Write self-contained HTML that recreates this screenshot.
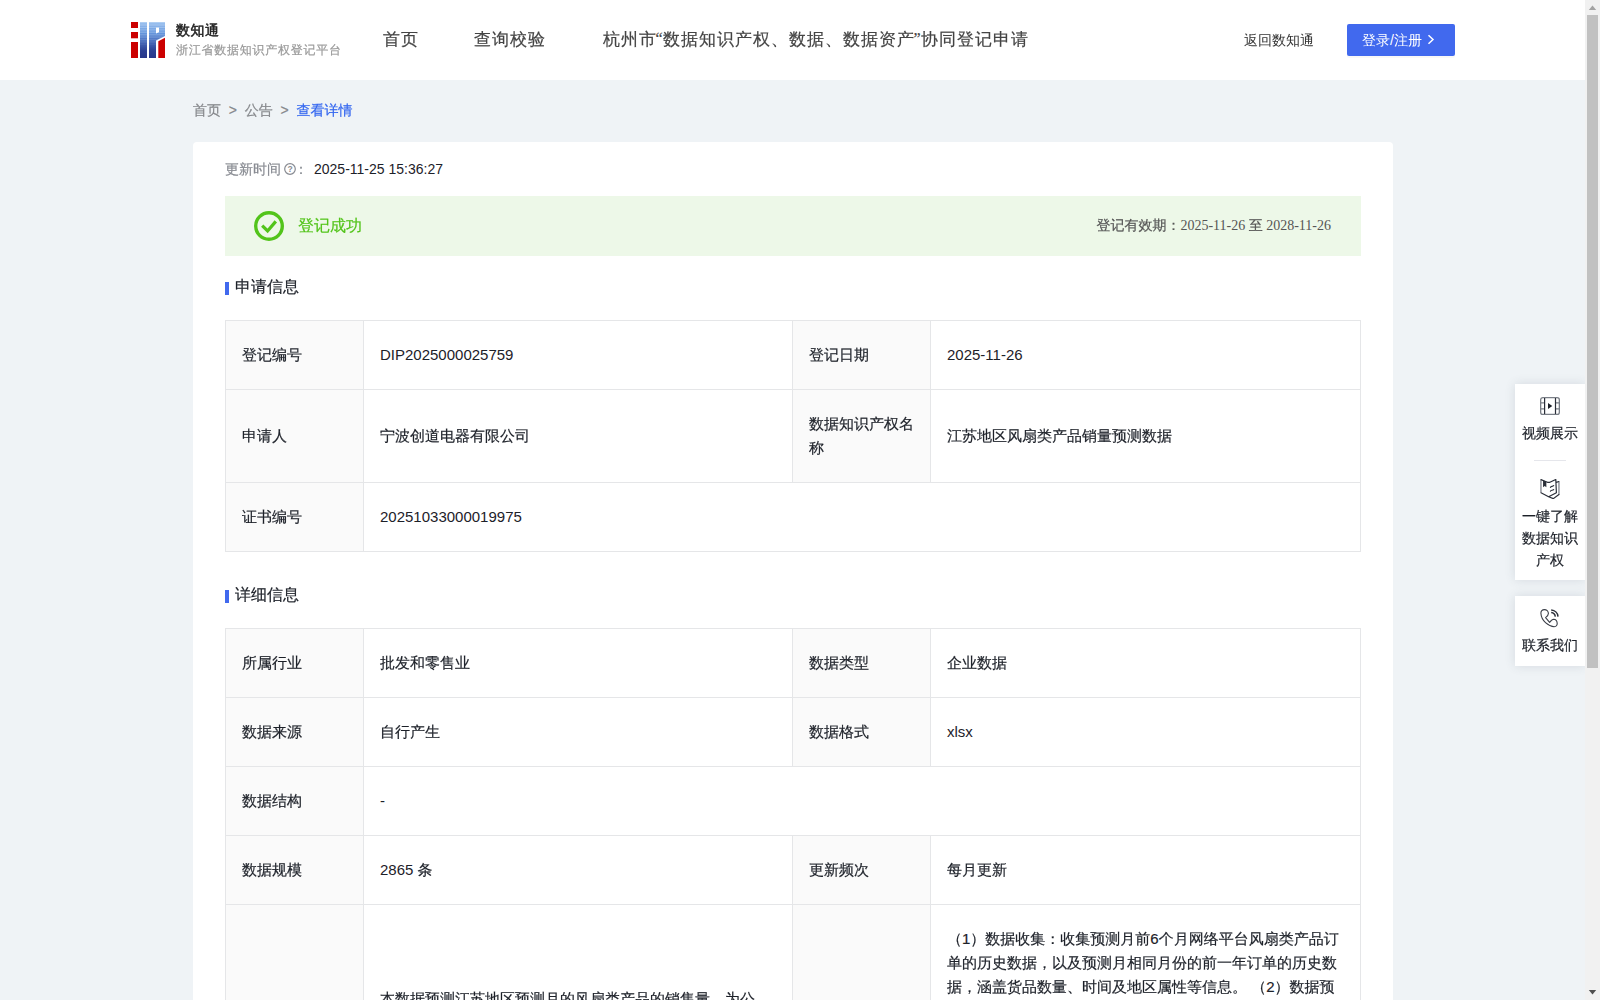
<!DOCTYPE html>
<html lang="zh-CN">
<head>
<meta charset="utf-8">
<title>数知通 - 查看详情</title>
<style>
*{box-sizing:border-box;margin:0;padding:0}
html,body{width:1600px;height:1000px;overflow:hidden}
body{background:#eff3f6;font-family:"Liberation Sans","WenQuanYi Zen Hei",sans-serif;font-size:14px;color:#1d2129;position:relative;-webkit-text-stroke:0.2px}
.n{-webkit-text-stroke:0}
.serif{font-family:"Liberation Serif","WenQuanYi Zen Hei",serif}
.header{position:absolute;left:0;top:0;width:1585px;height:80px;background:#fff}
.logo{position:absolute;left:131px;top:22px;width:34px;height:36px}
.brand{position:absolute;left:176px;top:21px;font-size:14px;line-height:18px;letter-spacing:0.5px;color:#222;-webkit-text-stroke:0.5px #222;white-space:nowrap}
.sub{position:absolute;left:176px;top:42px;font-size:12px;line-height:16px;letter-spacing:0.75px;color:#999;white-space:nowrap}
.nav{position:absolute;top:0;height:80px;line-height:80px;font-size:17px;letter-spacing:1px;color:#444;white-space:nowrap}
.nav q{quotes:none;display:inline-block;width:6px;letter-spacing:0;font-size:16px;position:relative;top:-1px;left:-1.5px}
.back{position:absolute;left:1244px;top:0;line-height:80px;font-size:14px;color:#333;white-space:nowrap}
.login{position:absolute;left:1347px;top:24px;width:108px;height:32px;background:#4169ee;border-radius:2px;color:#fff;font-size:14px;line-height:32px;padding-left:15px;white-space:nowrap;box-shadow:0 2px 1px rgba(0,0,0,0.03)}
.login svg{position:absolute;left:80px;top:9.5px;width:8px;height:11px}
.crumb{position:absolute;left:193px;top:100px;font-size:14px;line-height:20px;color:#86888c;white-space:nowrap}
.crumb b{font-weight:normal;color:#3366f0}
.crumb i{font-style:normal;margin:0 7.75px}
.card{position:absolute;left:193px;top:142px;width:1200px;height:900px;background:#fff;border-radius:4px}
.upd{position:absolute;left:32px;top:17px;font-size:14px;line-height:20px;color:#888b92;white-space:nowrap}
.upd .q{position:absolute;left:59px;top:4px;width:12px;height:12px}
.upd .c{position:absolute;left:69px;top:0}
.upd .t{position:absolute;left:89px;top:0;color:#1d2129}
.banner{position:absolute;left:32px;top:54px;width:1136px;height:60px;background:#edf8e8}
.banner svg{position:absolute;left:28px;top:14px;width:32px;height:32px}
.banner .ok{position:absolute;left:73px;top:0;line-height:60px;font-size:16px;color:#52c41a;white-space:nowrap}
.banner .valid{position:absolute;right:30px;top:0;line-height:60px;font-size:14px;color:#555;white-space:nowrap}
.sec{position:absolute;left:32px;font-size:16px;line-height:22px;color:#1d2129;padding-left:10px;white-space:nowrap}
.sec:before{content:"";position:absolute;left:0;top:6px;width:4px;height:13px;background:#4169ee}
table{position:absolute;left:32px;width:1135px;border-collapse:collapse;table-layout:fixed;font-size:15px;line-height:24px;color:#1d2129}
td{border:1px solid #e5e6e8;padding:22px 16px;vertical-align:middle}
td.l{background:#fafafa}
.side{position:absolute;left:1515px;width:70px;background:#fff;box-shadow:0 0 10px rgba(60,70,90,0.14);font-size:14px;line-height:22px;text-align:center;color:#1d2129}
.side svg{position:absolute;left:25px;width:20px;height:20px}
.side div{position:absolute;left:0;width:70px;white-space:nowrap}
.side hr{position:absolute;left:19px;top:76px;width:32px;height:1px;border:0;background:#e5e6eb}
.sb{position:absolute;left:1585px;top:0;width:15px;height:1000px;background:#f1f1f1}
.sb .th{position:absolute;left:2px;top:15px;width:11px;height:653px;background:#c1c1c1}
.sb svg{position:absolute;left:0;width:15px;height:15px}
</style>
</head>
<body>
<div class="header">
  <svg class="logo" viewBox="0 0 34 36">
    <defs>
      <linearGradient id="bg" x1="0" y1="0" x2="0" y2="1"><stop offset="0" stop-color="#94bdee"/><stop offset="0.3" stop-color="#6798de"/><stop offset="0.55" stop-color="#4569ba"/><stop offset="0.8" stop-color="#2c4093"/><stop offset="1" stop-color="#28378a"/></linearGradient>
      <linearGradient id="fade" x1="0" y1="0" x2="0" y2="1"><stop offset="0" stop-color="#fff" stop-opacity="0.42"/><stop offset="0.45" stop-color="#fff" stop-opacity="0.22"/><stop offset="0.7" stop-color="#fff" stop-opacity="0"/></linearGradient>
      <pattern id="ln" width="34" height="1.7" patternUnits="userSpaceOnUse"><rect x="0" y="0" width="34" height="0.6" fill="#fff"/></pattern>
      <mask id="lm"><rect x="0" y="0" width="34" height="36" fill="url(#ln)"/></mask>
    </defs>
    <rect x="0" y="0" width="7" height="6" fill="#cc0000"/>
    <rect x="0" y="10" width="7" height="6.3" fill="#cc0000"/>
    <rect x="0" y="20" width="7" height="16" fill="#cc0000"/>
    <rect x="9" y="0" width="7" height="36" fill="url(#bg)"/>
    <path d="M18 0H34V14L25 18.5V36H18Z M25 5.5V11.5L28 10.2V5.5Z" fill="url(#bg)" fill-rule="evenodd"/>
    <g mask="url(#lm)"><rect x="9" y="0" width="7" height="36" fill="url(#fade)"/><path d="M18 0H34V14L25 18.5V36H18Z M25 5.5V11.5L28 10.2V5.5Z" fill="url(#fade)" fill-rule="evenodd"/></g>
    <path d="M27.3 19.3L34 15.8V36H27.3Z" fill="#cc0000"/>
  </svg>
  <div class="brand">数知通</div>
  <div class="sub">浙江省数据知识产权登记平台</div>
  <div class="nav serif" style="left:383px">首页</div>
  <div class="nav serif" style="left:474px">查询校验</div>
  <div class="nav serif" style="left:603px">杭州市<q>“</q>数据知识产权、数据、数据资产<q>”</q>协同登记申请</div>
  <div class="back n">返回数知通</div>
  <div class="login n">登录/注册<svg viewBox="0 0 8 11"><path d="M1.5 1.2L6 5.5L1.5 9.8" fill="none" stroke="#fff" stroke-width="1.5"/></svg></div>
</div>
<div class="crumb">首页<i>&gt;</i>公告<i>&gt;</i><b>查看详情</b></div>
<div class="card">
  <div class="upd">更新时间<svg class="q" viewBox="0 0 12 12"><circle cx="6" cy="6" r="5.3" fill="none" stroke="#888b92" stroke-width="1.2"/><text x="6" y="9" font-size="8.5" font-family="Liberation Sans, sans-serif" font-weight="bold" text-anchor="middle" fill="#888b92" stroke="none">?</text></svg><span class="c">：</span><span class="t n">2025-11-25 15:36:27</span></div>
  <div class="banner">
    <svg viewBox="0 0 32 32"><circle cx="16" cy="16" r="13.3" fill="none" stroke="#52c41a" stroke-width="3.4"/><path d="M9.2 15.6L14.6 21L22.8 11.4" fill="none" stroke="#52c41a" stroke-width="3.2"/></svg>
    <div class="ok">登记成功</div>
    <div class="valid serif">登记有效期：<span class="n">2025-11-26</span> 至 <span class="n">2028-11-26</span></div>
  </div>
  <div class="sec" style="top:134px">申请信息</div>
  <table style="top:178px">
    <colgroup><col style="width:138px"><col style="width:429px"><col style="width:138px"><col style="width:430px"></colgroup>
    <tr><td class="l">登记编号</td><td class="n">DIP2025000025759</td><td class="l">登记日期</td><td class="n">2025-11-26</td></tr>
    <tr><td class="l">申请人</td><td>宁波创道电器有限公司</td><td class="l">数据知识产权名称</td><td>江苏地区风扇类产品销量预测数据</td></tr>
    <tr><td class="l">证书编号</td><td colspan="3" class="n">20251033000019975</td></tr>
  </table>
  <div class="sec" style="top:442px">详细信息</div>
  <table style="top:486px">
    <colgroup><col style="width:138px"><col style="width:429px"><col style="width:138px"><col style="width:430px"></colgroup>
    <tr><td class="l">所属行业</td><td>批发和零售业</td><td class="l">数据类型</td><td>企业数据</td></tr>
    <tr><td class="l">数据来源</td><td>自行产生</td><td class="l">数据格式</td><td class="n">xlsx</td></tr>
    <tr><td class="l">数据结构</td><td colspan="3" class="n">-</td></tr>
    <tr><td class="l">数据规模</td><td><span class="n">2865</span> 条</td><td class="l">更新频次</td><td>每月更新</td></tr>
    <tr><td class="l">数据简介</td><td>本数据预测江苏地区预测月的风扇类产品的销售量，为公<br>司的生产计划、库存管理与营销决策提供数据支撑，帮助企业合理安排备货数量，降低库存积压风险，提升运营效率。</td><td class="l">算法规则简要说明</td><td>（1）数据收集：收集预测月前6个月网络平台风扇类产品订单的历史数据，以及预测月相同月份的前一年订单的历史数据，涵盖货品数量、时间及地区属性等信息。 （2）数据预处理：对采集的订单数据进行清洗、去重与脱敏，剔除异常值并按地区和月份汇总。（3）模型预测：结合季节性因素与同比增长率，采用加权移动平均算法计算预测月的销售量。（4）结果输出：生成预测数据表并定期更新，形成最终的数据集。以上规则仅为简要说明内容。</td></tr>
  </table>
</div>
<div class="side" style="top:384px;height:196px">
  <svg style="top:12px" viewBox="0 0 20 20"><rect x="0.65" y="1.65" width="18.7" height="16.7" rx="2.2" fill="none" stroke="#7a7f87" stroke-width="1.3"/><path d="M1 6.9H4.6M1 12.8H4.6M15.4 6.9H19M15.4 12.8H19" stroke="#7a7f87" stroke-width="1.2" fill="none"/><path d="M4.6 2V18M15.5 2V18" stroke="#2a2e38" stroke-width="1.2" fill="none"/><path d="M8 7V13L12.3 10Z" fill="#1d2129"/></svg>
  <div style="top:38px">视频展示</div>
  <hr>
  <svg style="top:95px" viewBox="0 0 20 20"><path d="M0.95 0.9V13.6M18.95 2.8V15.4" stroke="#8a8e96" stroke-width="1.4" fill="none"/><path d="M1 0.6L6.8 3Q8.6 3.9 10.4 3L15.8 0.5L16.4 13.8L8.6 17.7L1 13.8M8.6 17.7L13.25 19.65L18.95 15.6M16.3 3.4L18.9 2.5" fill="none" stroke="#2a2e38" stroke-width="1.2" stroke-linejoin="round" stroke-linecap="round"/><path d="M3.05 1.3L6.35 2.7V8.3L4.7 6.9L3.05 8.2Z" fill="#2a2e38"/><path d="M10.4 8.4Q10.7 7.6 12 7.4Q13.3 7.3 13.7 6.6M10.4 12.3Q10.7 11.5 12 11.3Q13.3 11.2 13.7 10.5" fill="none" stroke="#2a2e38" stroke-width="1.1" stroke-linecap="round"/></svg>
  <div style="top:121px">一键了解</div>
  <div style="top:143px">数据知识</div>
  <div style="top:165px">产权</div>
</div>
<div class="side" style="top:596px;height:70px">
  <svg style="top:12px" viewBox="0 0 20 20"><path d="M4.4 1.6C2.2 1.6 0.8 3 0.9 5.3C1.1 8.5 2.6 12 5.5 14.6C8.3 17.1 11.5 18.6 14.2 18.7C16.2 18.7 17.3 17.3 17.2 15.4C17.1 13.2 15.6 11.4 13.6 11.3C12.3 11.3 11.4 12.2 9.6 14.4L5.6 9.6C7.6 8 8.4 7 8.4 5.4C8.3 3.4 6.6 1.6 4.4 1.6Z" fill="none" stroke="#3a3e47" stroke-width="1.1" stroke-linejoin="round"/><path d="M11.2 2.1C14.8 2.4 17.8 5 18 8.6M11.2 4.6C13.4 4.9 15 6.4 15.3 8.6" fill="none" stroke="#2a2e38" stroke-width="1.5"/></svg>
  <div style="top:38px">联系我们</div>
</div>
<div class="sb">
  <svg style="top:0" viewBox="0 0 15 15"><path d="M3.8 10L7.5 5.6L11.2 10Z" fill="#a3a3a3"/></svg>
  <div class="th"></div>
  <svg style="top:985px" viewBox="0 0 15 15"><path d="M3.8 5L7.5 9.4L11.2 5Z" fill="#505050"/></svg>
</div>
</body>
</html>
